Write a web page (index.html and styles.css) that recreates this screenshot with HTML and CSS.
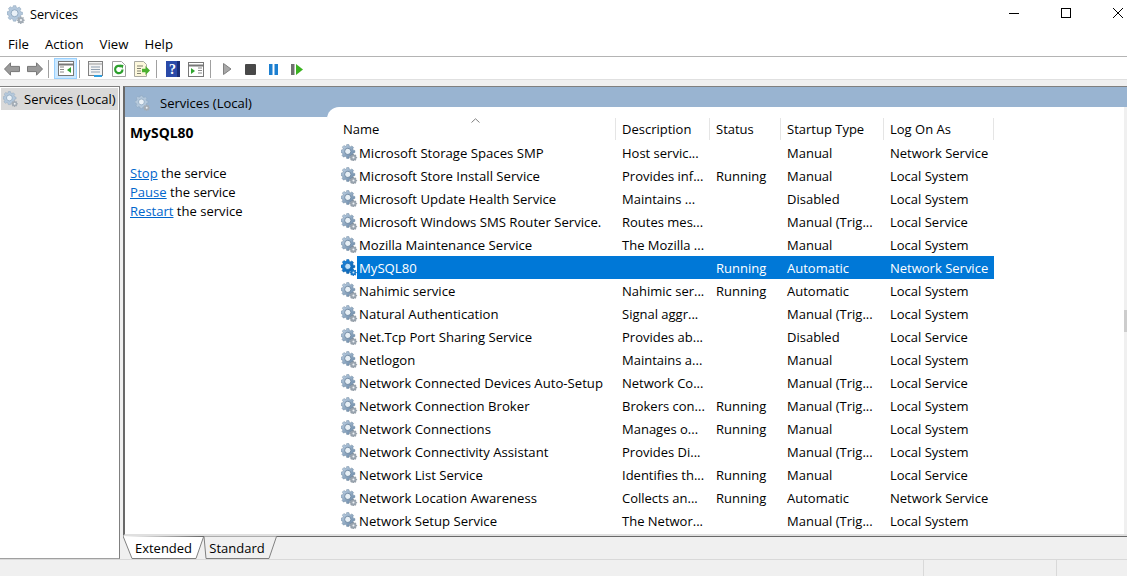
FILE: index.html
```html
<!DOCTYPE html>
<html lang="en">
<head>
<meta charset="utf-8">
<title>Services</title>
<link rel="stylesheet" href="styles.css">
</head>
<body>
<svg class="defs" width="0" height="0" aria-hidden="true">
  <defs>
    <linearGradient id="gb" x1="0" y1="0" x2="1" y2="1"><stop offset="0" stop-color="#c4d6e8"/><stop offset="1" stop-color="#5f7f9f"/></linearGradient>
    <linearGradient id="gs" x1="0" y1="0" x2="1" y2="1"><stop offset="0" stop-color="#1f8be6"/><stop offset="1" stop-color="#0a5ea8"/></linearGradient>
    <g id="gearshape">
      <path d="M6 .6h2.400l.4 1.700 1.300.6 1.500-.9 1.700 1.700-.9 1.500.6 1.300 1.700.4V9l-1.700.4-.6 1.300.9 1.500-1.700 1.700-1.500-.9-1.300.6-.4 1.700H6l-.4-1.700-1.300-.6-1.500.9-1.700-1.700.9-1.500-.6-1.300L0 9V6.500l1.700-.4.6-1.300-.9-1.500 1.700-1.700 1.500.9 1.300-.6z"/>
    </g>
    <symbol id="gear" viewBox="0 0 18 18">
      <use href="#gearshape" fill="url(#gb)" stroke="#6d869f" stroke-width=".5"/>
      <circle cx="7.200" cy="7.800" r="3.300" fill="#e8f0f6" stroke="#5d7892" stroke-width=".8"/>
      <path d="M12.800 10.500l.7.100.2.9.8.3.8-.4.7.7-.4.8.3.8.9.2v1l-.9.2-.3.8.4.8-.7.7-.8-.4-.8.3-.2.9h-1l-.2-.9-.8-.3-.8.4-.7-.7.4-.8-.3-.8-.9-.2v-1l.9-.2.3-.8-.4-.8.7-.7.8.4.8-.3.2-.9z" fill="#9aa5b0" stroke="#6b7580" stroke-width=".3"/>
      <circle cx="13.200" cy="14.300" r="1.100" fill="#eef2f5"/>
    </symbol>
    <symbol id="gearsel" viewBox="0 0 18 18">
      <use href="#gearshape" fill="url(#gs)" stroke="#0b5a9e" stroke-width=".5"/>
      <circle cx="7.200" cy="7.800" r="3.300" fill="#bfe0fa" stroke="#0a5ea8" stroke-width=".8"/>
      <path d="M12.800 10.500l.7.100.2.9.8.3.8-.4.7.7-.4.8.3.8.9.2v1l-.9.2-.3.8.4.8-.7.7-.8-.4-.8.3-.2.9h-1l-.2-.9-.8-.3-.8.4-.7-.7.4-.8-.3-.8-.9-.2v-1l.9-.2.3-.8-.4-.8.7-.7.8.4.8-.3.2-.9z" fill="#1477c8"/>
      <circle cx="13.200" cy="14.300" r="1.100" fill="#cfe7fb"/>
    </symbol>
    <symbol id="gearlight" viewBox="0 0 18 18">
      <use href="#gearshape" fill="#b4c8dc" stroke="#8ba3bb" stroke-width=".5"/>
      <circle cx="7.200" cy="7.800" r="3.300" fill="#eaf1f7" stroke="#86a0b9" stroke-width=".8"/>
      <path d="M12.800 10.500l.7.100.2.9.8.3.8-.4.7.7-.4.8.3.8.9.2v1l-.9.2-.3.8.4.8-.7.7-.8-.4-.8.3-.2.9h-1l-.2-.9-.8-.3-.8.4-.7-.7.4-.8-.3-.8-.9-.2v-1l.9-.2.3-.8-.4-.8.7-.7.8.4.8-.3.2-.9z" fill="#a3acb5"/>
      <circle cx="13.200" cy="14.300" r="1.100" fill="#eef2f5"/>
    </symbol>
  </defs>
</svg>

<header class="titlebar">
  <svg class="app-icon"><use href="#gearlight"/></svg>
  <span class="app-title">Services</span>
  <div class="win-controls">
    <svg class="win-btn" viewBox="0 0 12 12"><path d="M1 6.500h10" stroke="#000" fill="none"/></svg>
    <svg class="win-btn" viewBox="0 0 12 12"><rect x="1.500" y="1.500" width="9" height="9" stroke="#000" fill="none"/></svg>
    <svg class="win-btn" viewBox="0 0 12 12"><path d="M1 1l10 10M11 1L1 11" stroke="#000" fill="none"/></svg>
  </div>
</header>

<nav class="menubar">
  <span class="menu-item">File</span>
  <span class="menu-item">Action</span>
  <span class="menu-item">View</span>
  <span class="menu-item">Help</span>
</nav>

<div class="toolbar">
  <span class="tool"><svg viewBox="0 0 16 14" width="16" height="14"><path d="M.5 7L6.500.8v3.600h9v5.200h-9v3.600z" fill="#9a9a9a" stroke="#777"/></svg></span>
  <span class="tool"><svg viewBox="0 0 16 14" width="16" height="14"><path d="M15.500 7L9.500.8v3.600h-9v5.200h9v3.600z" fill="#9a9a9a" stroke="#777"/></svg></span>
  <span class="sep sep-first"></span>
  <span class="tool tool-active"><svg viewBox="0 0 16 15" width="16" height="15"><rect x=".5" y=".5" width="15" height="14" fill="#fff" stroke="#777"/><path d="M.5 3.500h15" stroke="#777" stroke-width="2"/><path d="M2 6h4M2 8.500h4M2 11h4" stroke="#888"/><path d="M13 6v6l-4-3z" fill="#2fa52f"/></svg></span>
  <span class="sep"></span>
  <span class="tool tool-after"><svg viewBox="0 0 16 16" width="16" height="16"><rect x=".5" y=".5" width="14" height="14" fill="#f4f4f4" stroke="#808080"/><path d="M.5 3h14" stroke="#999"/><path d="M3 6h9M3 8.500h9M3 11h9" stroke="#8f9fb0"/><path d="M6 15h8" stroke="#2f9fe0" stroke-width="2"/></svg></span>
  <span class="tool"><svg viewBox="0 0 14 16" width="14" height="16"><path d="M.5.500h9l4 4v11H.5z" fill="#fff" stroke="#a0a0a0"/><path d="M10.500 8.500a3.700 3.700 0 1 1-1.300-2.800" fill="none" stroke="#2c9f2c" stroke-width="2.200"/><path d="M7.500 3.500l4 .5-1 3.800z" fill="#2c9f2c"/></svg></span>
  <span class="tool"><svg viewBox="0 0 16 16" width="16" height="16"><path d="M.5.500h9l3 3v12H.5z" fill="#fdf8dc" stroke="#a8a8a0"/><path d="M3 5h6M3 7.500h4M3 10h4M3 12.500h4" stroke="#808070"/><path d="M8 7.800h3.500V5l4.500 4.500-4.500 4.500v-2.800H8z" fill="#4cb030"/></svg></span>
  <span class="sep sep-b"></span>
  <span class="tool tool-after"><svg viewBox="0 0 14 16" width="14" height="16"><rect width="14" height="16" fill="#2a4aa8"/><rect x="11" width="3" height="16" fill="#1b2f78"/><text class="help-q" x="6.500" y="13">?</text></svg></span>
  <span class="tool"><svg viewBox="0 0 16 15" width="16" height="15"><rect x=".5" y=".5" width="15" height="14" fill="#fff" stroke="#777"/><path d="M.5 3.500h15" stroke="#777" stroke-width="2"/><path d="M10 6h4M10 8.500h4M10 11h4" stroke="#888"/><path d="M3 6v6l4-3z" fill="#2fa52f"/></svg></span>
  <span class="sep sep-c"></span>
  <span class="tool tool-media"><svg viewBox="0 0 9 12" width="9" height="12"><path d="M.5.500L8 6 .5 11.500z" fill="#a8a8a8" stroke="#808080"/></svg></span>
  <span class="tool"><svg viewBox="0 0 11 11" width="11" height="11"><rect width="11" height="11" rx="1" fill="#484848"/></svg></span>
  <span class="tool"><svg viewBox="0 0 9 11" width="9" height="11"><path d="M0 0h3.500v11H0zM5.500 0H9v11H5.500z" fill="#1c7fd0"/></svg></span>
  <span class="tool"><svg viewBox="0 0 12 11" width="12" height="11"><path d="M0 0h3.500v11H0z" fill="#707070"/><path d="M5 0l7 5.500L5 11z" fill="#3bb320"/></svg></span>
</div>

<main class="workspace">
  <aside class="tree">
    <div class="tree-item">
      <svg class="small-gear"><use href="#gearlight"/></svg>
      <span>Services (Local)</span>
    </div>
  </aside>

  <section class="console">
    <div class="console-body">
      <div class="details">
        <div class="console-title">
          <svg class="small-gear"><use href="#gearlight"/></svg>
          <span>Services (Local)</span>
        </div>
        <h2 class="details-name">MySQL80</h2>
        <p class="details-line"><a class="link">Stop</a> the service</p>
        <p class="details-line"><a class="link">Pause</a> the service</p>
        <p class="details-line"><a class="link">Restart</a> the service</p>
      </div>

      <div class="list-col">
        <div class="blue-strip"></div>
        <div class="list-wrap">
          <div class="list">
            <div class="row head">
              <span class="cell first">Name<svg class="caret" viewBox="0 0 9 5" width="9" height="5"><path d="M.5 4.500L4.500.8l4 3.700" fill="none" stroke="#808080"/></svg></span>
              <span class="cell">Description</span>
              <span class="cell">Status</span>
              <span class="cell">Startup Type</span>
              <span class="cell">Log On As</span>
            </div>
            <div class="row"><span class="cell first"><svg class="gear"><use href="#gear"/></svg>Microsoft Storage Spaces SMP</span><span class="cell">Host servic...</span><span class="cell"></span><span class="cell">Manual</span><span class="cell">Network Service</span></div>
            <div class="row"><span class="cell first"><svg class="gear"><use href="#gear"/></svg>Microsoft Store Install Service</span><span class="cell">Provides inf...</span><span class="cell">Running</span><span class="cell">Manual</span><span class="cell">Local System</span></div>
            <div class="row"><span class="cell first"><svg class="gear"><use href="#gear"/></svg>Microsoft Update Health Service</span><span class="cell">Maintains ...</span><span class="cell"></span><span class="cell">Disabled</span><span class="cell">Local System</span></div>
            <div class="row"><span class="cell first"><svg class="gear"><use href="#gear"/></svg>Microsoft Windows SMS Router Service.</span><span class="cell">Routes mes...</span><span class="cell"></span><span class="cell">Manual (Trig...</span><span class="cell">Local Service</span></div>
            <div class="row"><span class="cell first"><svg class="gear"><use href="#gear"/></svg>Mozilla Maintenance Service</span><span class="cell">The Mozilla ...</span><span class="cell"></span><span class="cell">Manual</span><span class="cell">Local System</span></div>
            <div class="row selected"><span class="cell first"><svg class="gear"><use href="#gearsel"/></svg><span class="sel-name">MySQL80</span></span><span class="cell"></span><span class="cell">Running</span><span class="cell">Automatic</span><span class="cell">Network Service</span></div>
            <div class="row"><span class="cell first"><svg class="gear"><use href="#gear"/></svg>Nahimic service</span><span class="cell">Nahimic ser...</span><span class="cell">Running</span><span class="cell">Automatic</span><span class="cell">Local System</span></div>
            <div class="row"><span class="cell first"><svg class="gear"><use href="#gear"/></svg>Natural Authentication</span><span class="cell">Signal aggr...</span><span class="cell"></span><span class="cell">Manual (Trig...</span><span class="cell">Local System</span></div>
            <div class="row"><span class="cell first"><svg class="gear"><use href="#gear"/></svg>Net.Tcp Port Sharing Service</span><span class="cell">Provides ab...</span><span class="cell"></span><span class="cell">Disabled</span><span class="cell">Local Service</span></div>
            <div class="row"><span class="cell first"><svg class="gear"><use href="#gear"/></svg>Netlogon</span><span class="cell">Maintains a...</span><span class="cell"></span><span class="cell">Manual</span><span class="cell">Local System</span></div>
            <div class="row"><span class="cell first"><svg class="gear"><use href="#gear"/></svg>Network Connected Devices Auto-Setup</span><span class="cell">Network Co...</span><span class="cell"></span><span class="cell">Manual (Trig...</span><span class="cell">Local Service</span></div>
            <div class="row"><span class="cell first"><svg class="gear"><use href="#gear"/></svg>Network Connection Broker</span><span class="cell">Brokers con...</span><span class="cell">Running</span><span class="cell">Manual (Trig...</span><span class="cell">Local System</span></div>
            <div class="row"><span class="cell first"><svg class="gear"><use href="#gear"/></svg>Network Connections</span><span class="cell">Manages o...</span><span class="cell">Running</span><span class="cell">Manual</span><span class="cell">Local System</span></div>
            <div class="row"><span class="cell first"><svg class="gear"><use href="#gear"/></svg>Network Connectivity Assistant</span><span class="cell">Provides Di...</span><span class="cell"></span><span class="cell">Manual (Trig...</span><span class="cell">Local System</span></div>
            <div class="row"><span class="cell first"><svg class="gear"><use href="#gear"/></svg>Network List Service</span><span class="cell">Identifies th...</span><span class="cell">Running</span><span class="cell">Manual</span><span class="cell">Local Service</span></div>
            <div class="row"><span class="cell first"><svg class="gear"><use href="#gear"/></svg>Network Location Awareness</span><span class="cell">Collects an...</span><span class="cell">Running</span><span class="cell">Automatic</span><span class="cell">Network Service</span></div>
            <div class="row"><span class="cell first"><svg class="gear"><use href="#gear"/></svg>Network Setup Service</span><span class="cell">The Networ...</span><span class="cell"></span><span class="cell">Manual (Trig...</span><span class="cell">Local System</span></div>
          </div>
          <div class="scrollbar"><div class="thumb"></div></div>
        </div>
      </div>
    </div>

    <div class="tabs">
      <div class="tab tab-ext">
        <svg class="tab-shape" viewBox="0 0 81 23"><path d="M0 0L9 22.500H73L80.500 1" fill="#fff" stroke="#808080"/></svg>
        <span>Extended</span>
      </div>
      <div class="tab tab-std">
        <svg class="tab-shape" viewBox="0 0 80 23"><path d="M7 .5L9 22.500H72L79.500 .5" fill="#f0f0f0" stroke="#808080"/></svg>
        <span>Standard</span>
      </div>
    </div>
  </section>
</main>

<footer class="statusbar">
  <div class="status-cell status-a"></div>
  <div class="status-cell status-b"></div>
  <div class="status-cell status-c"></div>
</footer>
</body>
</html>
```

FILE: styles.css
```css
* { box-sizing: border-box; }
html, body { margin: 0; padding: 0; }
body {
  width: 1127px;
  height: 576px;
  overflow: hidden;
  display: flex;
  flex-direction: column;
  background: #fff;
  color: #000;
  font-family: "Open Sans", "Noto Sans", sans-serif;
  font-size: 13px;
}
.defs { position: absolute; }

.titlebar { height: 28px; display: flex; align-items: center; flex: none; }
.app-icon { width: 19px; height: 19px; margin-left: 7px; }
.app-title { margin-left: 4px; font-size: 12.7px; }
.win-controls { margin-left: auto; display: flex; margin-top: -2px; }
.win-btn { width: 12px; height: 12px; margin-left: 40px; }
.win-btn:last-child { margin-right: 3px; }

.menubar { height: 29px; flex: none; display: flex; align-items: center; padding: 3px 0 0 8px; border-bottom: 1px solid #b4b4b4; gap: 16px; font-size: 13.2px; }
.menu-item { line-height: 18px; }

.toolbar { height: 23px; flex: none; display: flex; align-items: center; padding-top: 1px; border-bottom: 1px solid #e0e0e0; }
.tool { width: 23px; height: 21px; display: flex; align-items: center; justify-content: center; flex: none; padding-top: 1px; }
.tool-active { background: #cce8ff; border: 1px solid #99d1ff; margin-left: 5px; margin-right: 2px; padding-top: 0; }
.sep { width: 1px; height: 18px; background: #a0a0a0; flex: none; }
.sep-first { margin-left: 2px; }
.sep-b { margin-left: 3px; }
.sep-c { margin-left: 3px; }
.tool-after { margin-left: 4px; }
.tool-media { margin-left: 5px; }
.help-q { font: bold 14px "Liberation Serif", serif; fill: #fff; text-anchor: middle; }

.workspace { flex: 1; min-height: 0; display: flex; background: #f0f0f0; padding-top: 6px; }
.tree { width: 120px; background: #fff; border-top: 1px solid #808080; border-right: 1px solid #808080; border-bottom: 1px solid #a0a0a0; padding: 1px 0 0 1px; flex: none; }
.tree-item { height: 22px; width: 117px; background: #d9d9d9; display: flex; align-items: center; gap: 5px; padding-left: 2px; white-space: nowrap; }
.small-gear { width: 16px; height: 16px; flex: none; }

.console { margin-left: 3px; flex: 1; min-width: 0; display: flex; flex-direction: column; }
.console-body { flex: 1; min-height: 0; display: flex; border-top: 1px solid #808080; border-left: 2px solid #696969; border-bottom: 2px solid #e0e0e0; background: #fff; }

.details { width: 202px; flex: none; font-size: 13.05px; }
.console-title { height: 30px; background: #99b4d1; display: flex; align-items: center; padding: 1px 0 0 10px; gap: 9px; }
.details-name { margin: 0 0 0 5px; padding-top: 6px; height: 47px; font-size: 13.9px; font-weight: 700; line-height: 20px; }
.details-line { margin: 0 0 0 5px; height: 19px; line-height: 19px; color: #000; }
.link { color: #0066cc; text-decoration: underline; }

.list-col { flex: 1; min-width: 0; display: flex; flex-direction: column; background: #99b4d1; }
.blue-strip { height: 20px; flex: none; }
.list-wrap { flex: 1; min-height: 0; display: flex; background: #fff; border-top-left-radius: 12px; overflow: hidden; }
.list { flex: 1; padding: 11px 0 0 10px; min-width: 0; }
.scrollbar { width: 3px; background: #f0f0f0; padding-top: 203px; flex: none; }
.thumb { height: 22px; background: #cdcdcd; }

.row { display: grid; grid-template-columns: 278px 94px 71px 103px 111px; height: 23px; width: 657px; }
.cell { display: flex; align-items: center; padding: 2px 0 0 7px; white-space: nowrap; overflow: hidden; line-height: 21px; }
.cell.first { padding-left: 4px; gap: 1px; font-size: 13.15px; }
.gear { width: 17px; height: 17px; flex: none; margin-bottom: 2px; }

.head .cell { height: 22px; padding-top: 0; padding-left: 6px; border-left: 1px solid #e5e5e5; }
.head .cell:last-child { border-right: 1px solid #e5e5e5; }
.head .cell.first { font-size: 13px; border-left: 0; position: relative; }
.caret { position: absolute; left: 134px; top: 0; }

.selected { background: linear-gradient(#0078d7, #0078d7) no-repeat 20px 0 / 100% 100%; color: #fff; }

.tabs { height: 23px; flex: none; display: flex; background: #f0f0f0; border-top: 1px solid #696969; }
.tab { position: relative; height: 22px; display: flex; align-items: center; justify-content: center; }
.tab span { position: relative; }
.tab-shape { position: absolute; left: 0; top: -1px; width: 100%; height: 23px; }
.tab-ext { width: 81px; z-index: 1; }
.tab-std { width: 80px; margin-left: -7px; }

.statusbar { height: 17px; flex: none; display: flex; background: #f0f0f0; border-top: 1px solid #d9d9d9; }
.status-cell { height: 100%; }
.status-a { width: 923px; }
.status-b { width: 133px; border-left: 1px solid #d9d9d9; }
.status-c { flex: 1; border-left: 1px solid #d9d9d9; }
```
